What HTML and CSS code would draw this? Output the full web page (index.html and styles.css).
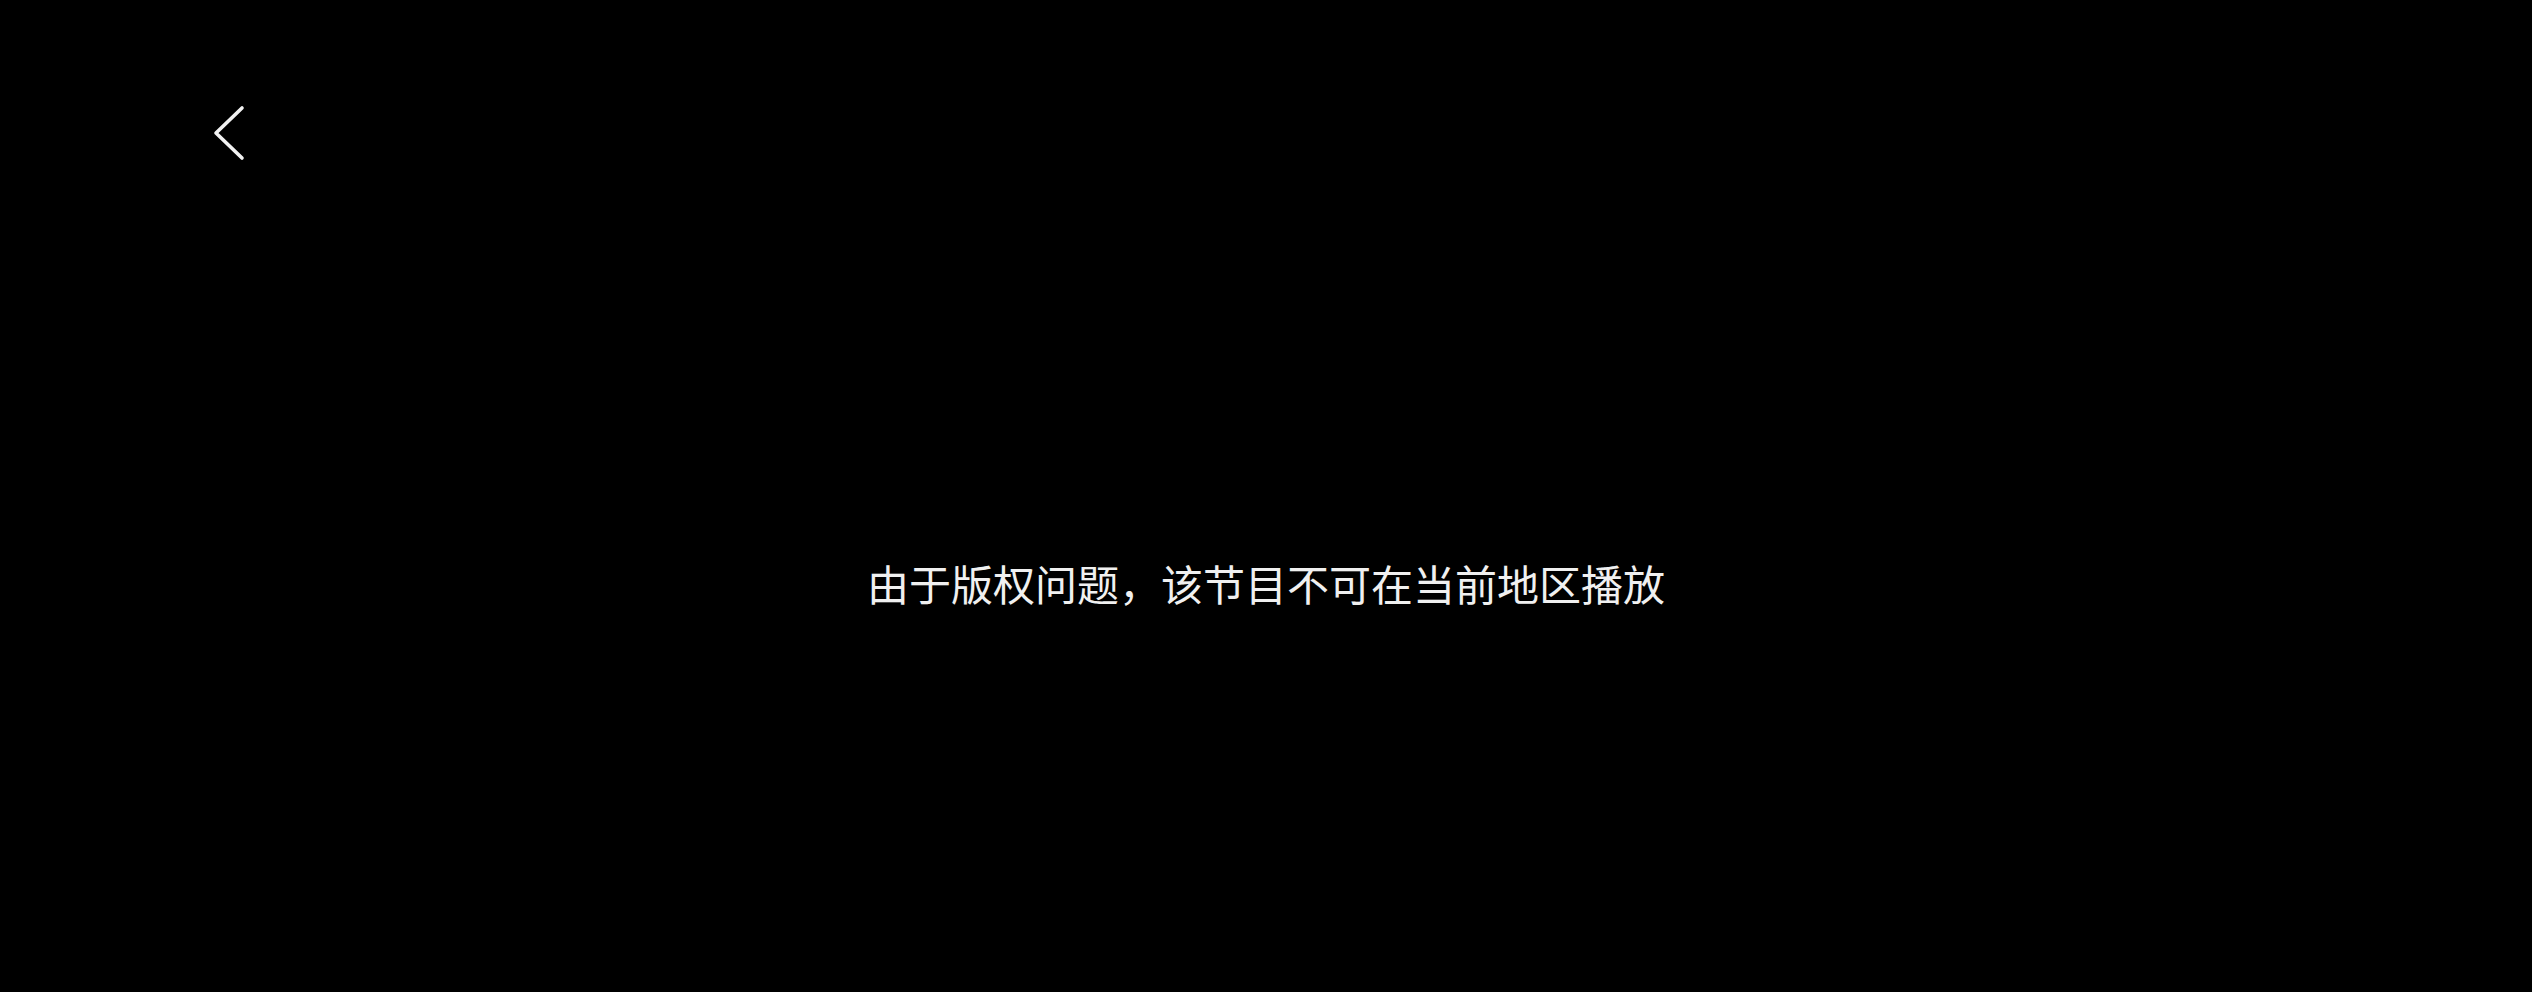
FILE: index.html
```html
<!DOCTYPE html>
<html lang="zh-CN">
<head>
<meta charset="utf-8">
<title>播放</title>
<link rel="stylesheet" href="styles.css">
</head>
<body>
<div class="page">
  <div class="topbar">
    <button class="back" aria-label="返回">
      <svg width="40" height="60" viewBox="0 0 40 60">
        <polyline points="32,4 6,29 32,54" fill="none" stroke="#f2f2f2" stroke-width="3.6" stroke-linecap="round" stroke-linejoin="round"/>
      </svg>
    </button>
  </div>
  <div class="message">由于版权问题，该节目不可在当前地区播放</div>
</div>
</body>
</html>
```
FILE: styles.css
```css
html, body {
  margin: 0;
  padding: 0;
  background: #000;
}
.page {
  width: 2532px;
  height: 992px;
  background: #000;
  display: flex;
  flex-direction: column;
  overflow: hidden;
}
.topbar {
  padding: 104px 0 0 210px;
  height: 60px;
}
.back {
  background: none;
  border: 0;
  padding: 0;
  margin: 0;
  display: block;
  cursor: pointer;
}
.back svg {
  display: block;
}
.message {
  margin-top: 394px;
  text-align: center;
  color: #f0f0f0;
  font-family: "Noto Sans CJK SC", "Noto Sans", sans-serif;
  font-size: 42px;
  line-height: 50px;
  font-weight: 400;
}
```
